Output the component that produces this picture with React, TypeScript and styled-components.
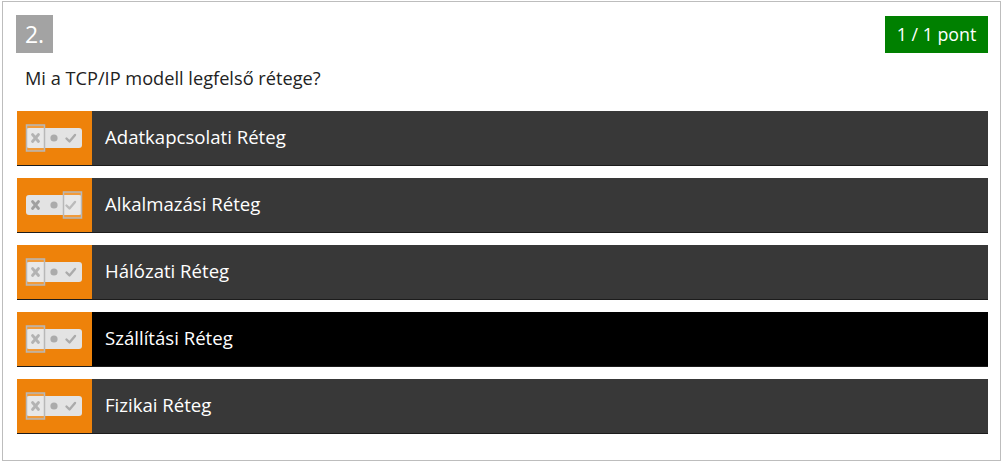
import React from "react";
import styled, { createGlobalStyle } from "styled-components";

const GlobalStyle = createGlobalStyle`
  html, body {
    margin: 0;
    padding: 0;
    background: #fff;
    font-family: "Open Sans", "Liberation Sans", sans-serif;
  }
`;

// Outer card of the question
const Card = styled.section`
  box-sizing: border-box;
  margin: 1px 0 0 2px;
  width: 999px;
  height: 460px;
  border: 1px solid #bdbdbd;
  padding: 13px 12px 26px 13px;
`;

const Header = styled.div`
  display: flex;
  justify-content: space-between;
  align-items: flex-start;
`;

const Number = styled.div`
  width: 37px;
  height: 38px;
  background: #a3a3a3;
  color: #fff;
  font-size: 23px;
  line-height: 38px;
  text-align: center;
`;

const Score = styled.div`
  width: 103px;
  height: 37px;
  margin-top: 1px;
  background: #008000;
  color: #fff;
  font-size: 17.8px;
  line-height: 37px;
  text-align: center;
`;

const Question = styled.p`
  margin: 0;
  padding: 13px 0 0 9px;
  font-size: 18.2px;
  line-height: 24px;
  color: #222;
`;

const Answers = styled.ul`
  list-style: none;
  margin: 21px 0 0 1px;
  padding: 0;
  display: flex;
  flex-direction: column;
  gap: 12px;
`;

const Answer = styled.li<{ $active?: boolean }>`
  display: flex;
  align-items: stretch;
  height: 55px;
  box-sizing: border-box;
  background: ${({ $active }) => ($active ? "#000" : "#383838")};
  border-bottom: 1px solid #1c1c1c;
`;

const Toggle = styled.div`
  width: 75px;
  flex: none;
  background: #ee820a;
  display: flex;
  align-items: center;
  padding-left: 8px;
  box-sizing: border-box;
`;

const Label = styled.span`
  display: flex;
  align-items: center;
  padding: 0 0 4px 13px;
  color: #fff;
  font-size: 18.6px;
`;

const Switch = ({ state }: { state: "wrong" | "right" }) => (
  <svg width="58" height="28" viewBox="0 0 58 28">
    <defs>
      <filter id="soft" x="-10%" y="-20%" width="120%" height="140%">
        <feGaussianBlur stdDeviation="0.5" />
      </filter>
    </defs>
    <rect x="1" y="4" width="56" height="20" rx="3" fill="#e3e3e3" filter="url(#soft)" />
    {/* cross */}
    <path d="M7.5 10.5 L13.5 17.5 M13.5 10.5 L7.5 17.5" stroke="#a0a0a0" strokeWidth="2.8" strokeLinecap="round" />
    {/* dot */}
    <circle cx="29" cy="14" r="3.6" fill="#ababab" />
    {/* check */}
    <path d="M41.5 14.5 L44.5 17.5 L50 11" stroke="#ababab" strokeWidth="2.4" fill="none" strokeLinecap="round" strokeLinejoin="round" />
    {state === "wrong" ? (
      <rect x="1.5" y="1" width="18" height="26" fill="rgba(255,255,255,0.2)" stroke="#b8b8b8" strokeWidth="1.5" />
    ) : (
      <rect x="38.5" y="1" width="18" height="26" fill="rgba(255,255,255,0.2)" stroke="#b8b8b8" strokeWidth="1.5" />
    )}
  </svg>
);

const answers = [
  { text: "Adatkapcsolati Réteg", state: "wrong" as const },
  { text: "Alkalmazási Réteg", state: "right" as const },
  { text: "Hálózati Réteg", state: "wrong" as const },
  { text: "Szállítási Réteg", state: "wrong" as const, active: true },
  { text: "Fizikai Réteg", state: "wrong" as const },
];

const App = () => {
  return (
    <>
      <GlobalStyle />
      <Card>
        <Header>
          <Number>2.</Number>
          <Score>1 / 1 pont</Score>
        </Header>
        <Question>Mi a TCP/IP modell legfelső rétege?</Question>
        <Answers>
          {answers.map((a) => (
            <Answer key={a.text} $active={a.active}>
              <Toggle>
                <Switch state={a.state} />
              </Toggle>
              <Label>{a.text}</Label>
            </Answer>
          ))}
        </Answers>
      </Card>
    </>
  );
};

export default App;
